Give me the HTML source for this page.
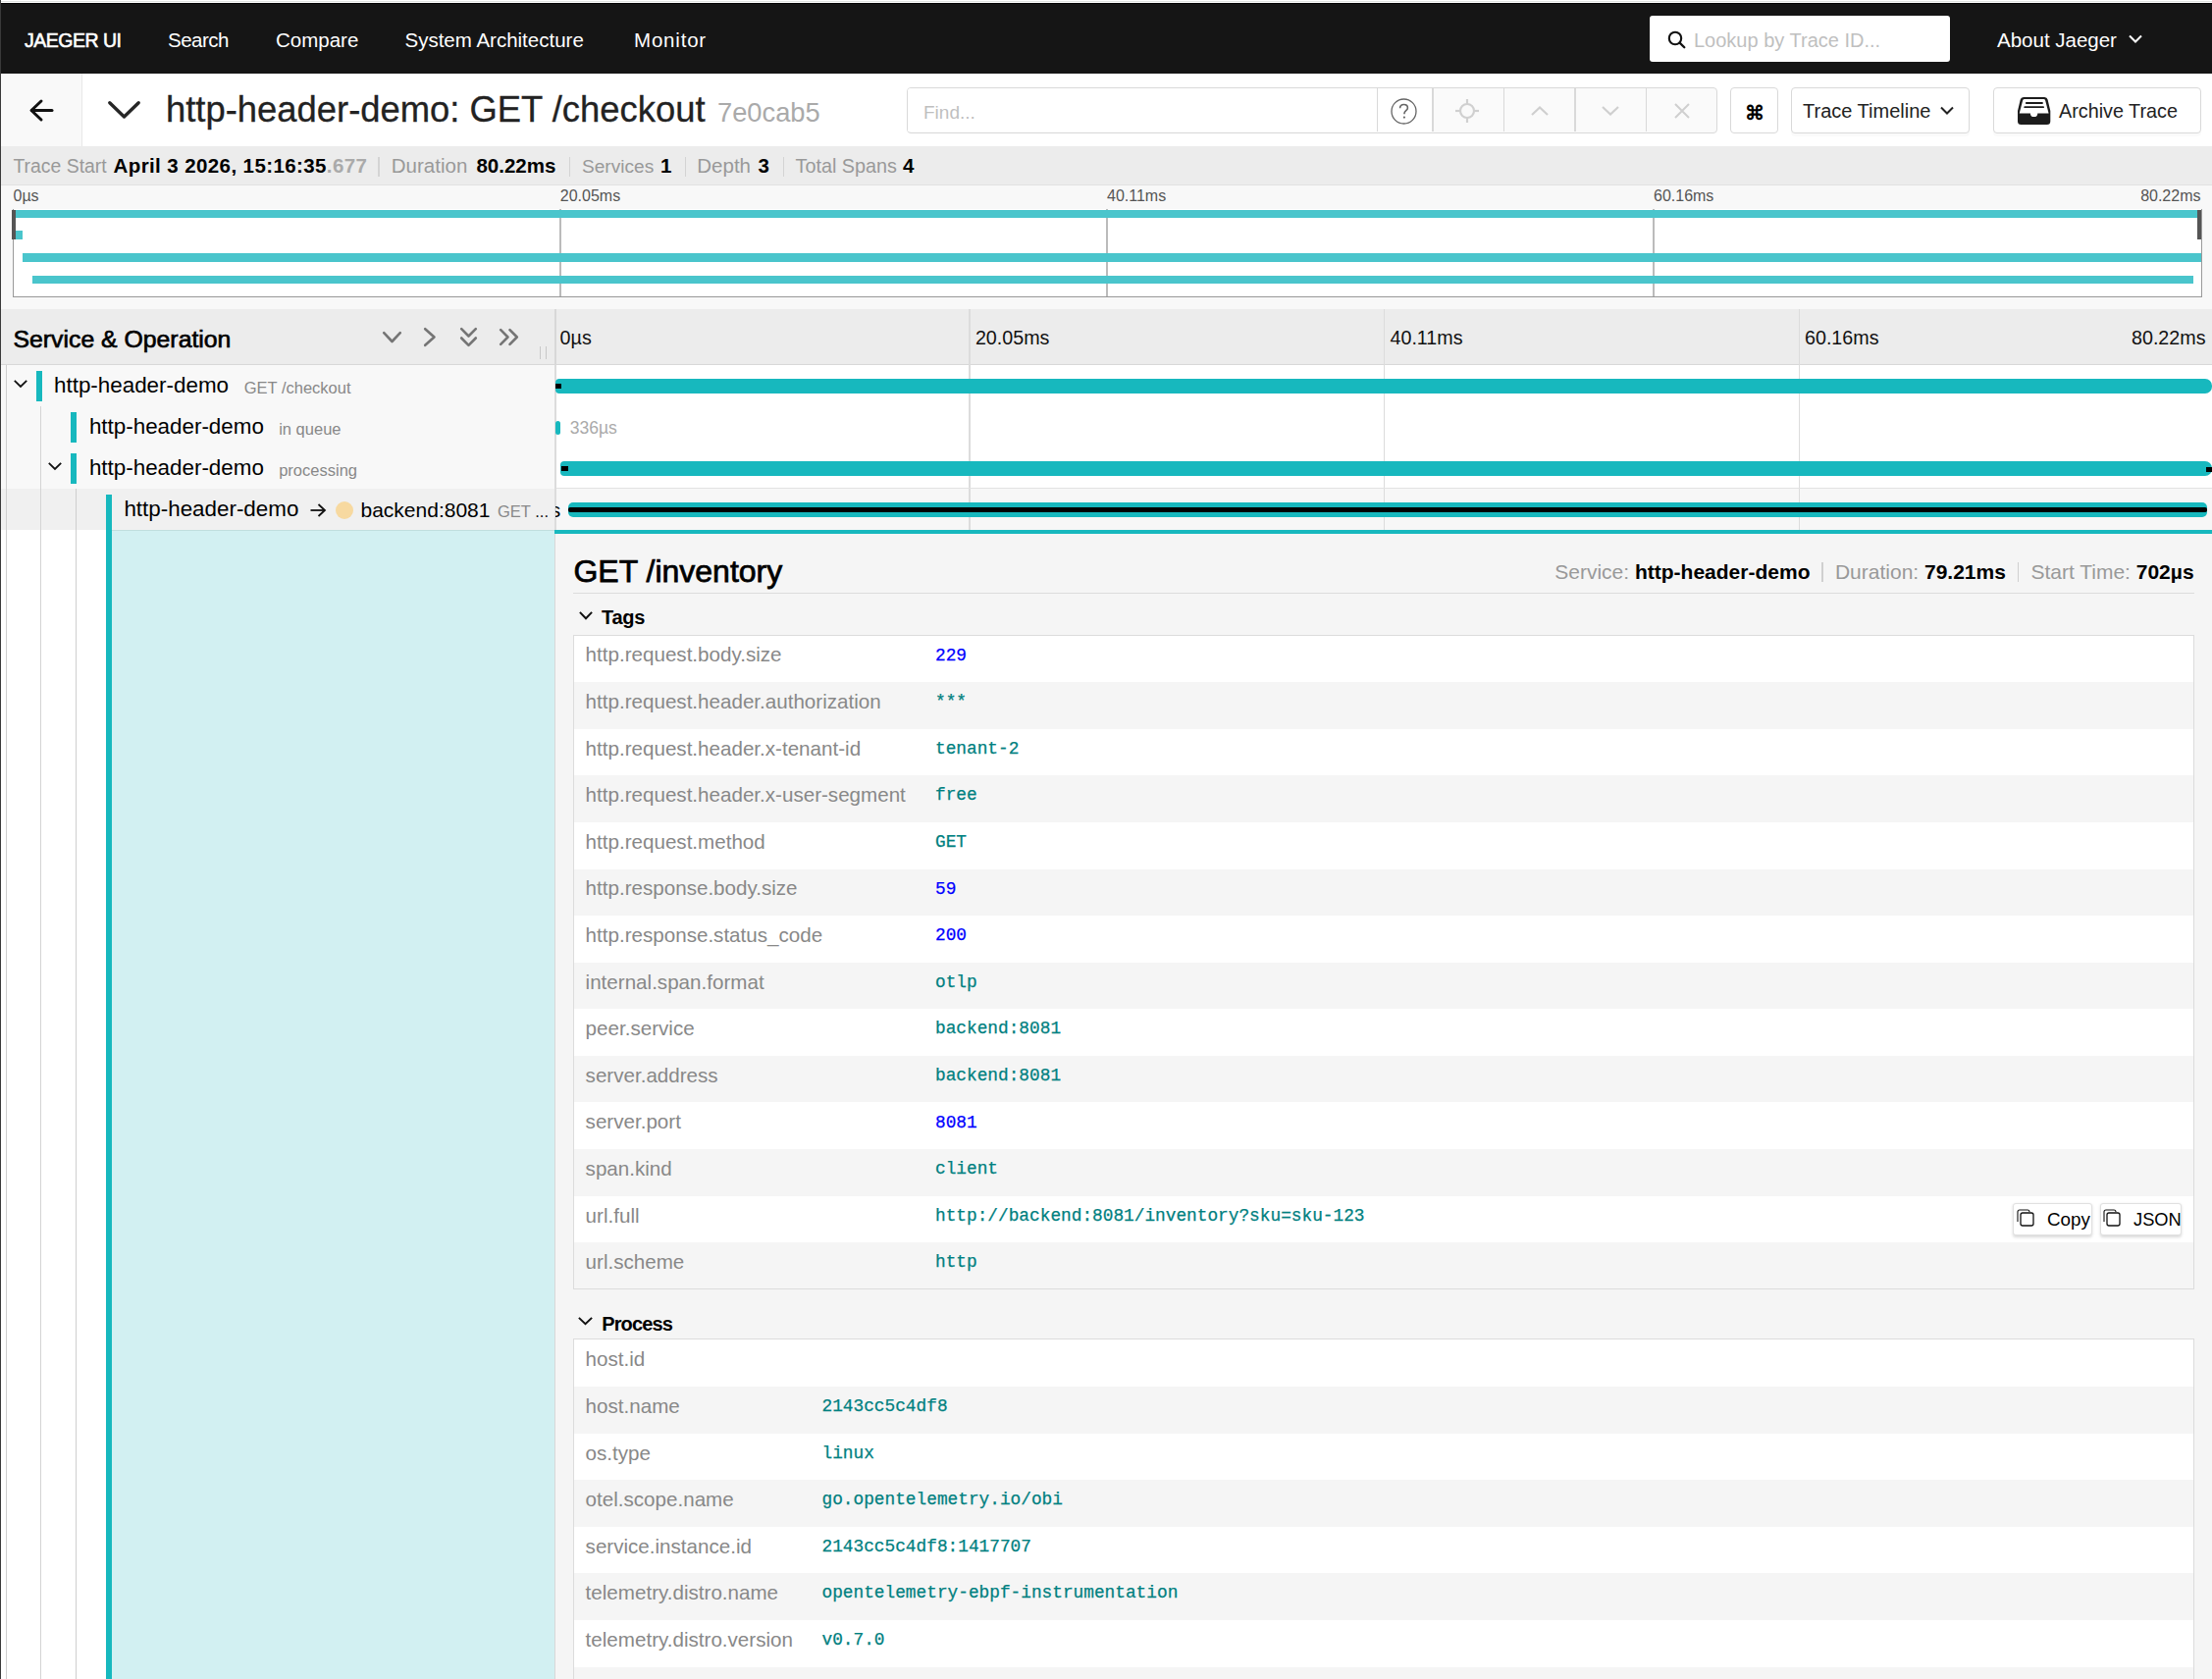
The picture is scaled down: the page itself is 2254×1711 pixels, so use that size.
<!DOCTYPE html>
<html><head><meta charset="utf-8">
<style>
*{box-sizing:border-box;margin:0;padding:0}
html,body{width:2254px;height:1711px;overflow:hidden}
body{position:relative;background:#fff;font-family:"Liberation Sans",sans-serif;color:#000}
.a{position:absolute}
.t{position:absolute;white-space:nowrap;line-height:1}
svg{position:absolute;overflow:visible}
.k{left:596.6px;font-size:20.6px;color:#888}
.v{font-family:"Liberation Mono",monospace;font-size:17.8px;-webkit-text-stroke:0.25px currentColor}
</style></head><body>
<div class="a" style="left:0;top:0;width:1px;height:1711px;background:#3a3a3a;z-index:5"></div>
<!-- top strip -->
<div class="a" style="left:0;top:1px;width:2254px;height:1px;background:#e0e2e0"></div>
<div class="a" style="left:0;top:3px;width:2254px;height:1px;background:#000"></div>
<!-- NAV -->
<div class="a" style="left:0;top:4px;width:2254px;height:71px;background:#151515"></div>
<div class="t" style="left:25px;top:31.5px;font-size:19.5px;letter-spacing:-0.5px;color:#fff;-webkit-text-stroke:0.55px #fff">JAEGER UI</div>
<div class="t" style="left:171px;top:30.6px;font-size:20.5px;letter-spacing:-0.5px;color:#fff">Search</div>
<div class="t" style="left:281px;top:30.6px;font-size:20.5px;color:#fff">Compare</div>
<div class="t" style="left:412.5px;top:30.6px;font-size:20.5px;color:#fff">System Architecture</div>
<div class="t" style="left:646px;top:30.6px;font-size:20.5px;letter-spacing:0.8px;color:#fff">Monitor</div>
<div class="a" style="left:1681px;top:16px;width:306px;height:47px;background:#fff;border-radius:3px"></div>
<svg style="left:1699px;top:31px" width="20" height="20" viewBox="0 0 20 20"><circle cx="8" cy="8" r="6.2" fill="none" stroke="#111" stroke-width="2.1"/><line x1="12.6" y1="12.6" x2="17.3" y2="17.3" stroke="#111" stroke-width="2.3" stroke-linecap="round"/></svg>
<div class="t" style="left:1726px;top:30.6px;font-size:20px;color:#bfbfbf">Lookup by Trace ID...</div>
<div class="t" style="left:2035px;top:30.6px;font-size:20.5px;color:#fff">About Jaeger</div>
<svg style="left:2169px;top:35px" width="14" height="9" viewBox="0 0 14 9"><polyline points="1,1.5 7,7.5 13,1.5" fill="none" stroke="#fff" stroke-width="2"/></svg>

<!-- TRACE HEADER -->
<div class="a" style="left:1px;top:75px;width:83px;height:74px;background:#f9f9f9;border-right:1.5px solid #e8e8e8"></div>
<svg style="left:30px;top:101px" width="25" height="23" viewBox="0 0 25 23"><polyline points="12,2 2,11.5 12,21" fill="none" stroke="#111" stroke-width="3" stroke-linecap="round" stroke-linejoin="round"/><line x1="2.5" y1="11.5" x2="23" y2="11.5" stroke="#111" stroke-width="3" stroke-linecap="round"/></svg>
<svg style="left:110px;top:103px" width="33" height="18" viewBox="0 0 33 18"><polyline points="1.8,1.8 16.5,16 31.2,1.8" fill="none" stroke="#262626" stroke-width="3.4" stroke-linecap="round" stroke-linejoin="round"/></svg>
<div class="t" style="left:169px;top:93.8px;font-size:36.4px;color:#222;-webkit-text-stroke:0.3px #222">http-header-demo: GET /checkout</div>
<div class="t" style="left:731px;top:101.4px;font-size:27.3px;color:#aaa">7e0cab5</div>

<div class="a" style="left:923.5px;top:88.5px;width:826px;height:47px;border:1px solid #d9d9d9;border-radius:4px;background:#fafafa;overflow:hidden">
  <div class="a" style="left:0;top:0;width:535px;height:44px;background:#fff"></div>
  <div class="a" style="left:478px;top:0;width:1.5px;height:44px;background:#d9d9d9"></div>
  <div class="a" style="left:534.5px;top:0;width:1.5px;height:44px;background:#d9d9d9"></div>
  <div class="a" style="left:607px;top:0;width:1.5px;height:44px;background:#d9d9d9"></div>
  <div class="a" style="left:679.5px;top:0;width:1.5px;height:44px;background:#d9d9d9"></div>
  <div class="a" style="left:752px;top:0;width:1.5px;height:44px;background:#d9d9d9"></div>
</div>
<div class="t" style="left:941px;top:104.5px;font-size:19px;color:#bfbfbf">Find...</div>
<svg style="left:1417px;top:99.5px" width="27" height="27" viewBox="0 0 27 27"><circle cx="13.5" cy="13.5" r="12.5" fill="none" stroke="#666" stroke-width="1.3"/><path d="M9.6 10.3c0-2.3 1.7-3.8 3.9-3.8s3.9 1.4 3.9 3.4c0 2.6-3.4 2.8-3.4 5.6v0.8" fill="none" stroke="#666" stroke-width="1.6"/><circle cx="13.9" cy="19.6" r="1.1" fill="#666"/></svg>
<svg style="left:1483px;top:101px" width="24" height="24" viewBox="0 0 24 24"><circle cx="12" cy="12" r="7" fill="none" stroke="#d0d0d0" stroke-width="2.2"/><line x1="12" y1="0" x2="12" y2="5" stroke="#d0d0d0" stroke-width="2.2"/><line x1="12" y1="19" x2="12" y2="24" stroke="#d0d0d0" stroke-width="2.2"/><line x1="0" y1="12" x2="5" y2="12" stroke="#d0d0d0" stroke-width="2.2"/><line x1="19" y1="12" x2="24" y2="12" stroke="#d0d0d0" stroke-width="2.2"/></svg>
<svg style="left:1560px;top:107.5px" width="18" height="10" viewBox="0 0 18 10"><polyline points="1,9 9,1.5 17,9" fill="none" stroke="#cfcfcf" stroke-width="2.2"/></svg>
<svg style="left:1632px;top:107.5px" width="18" height="10" viewBox="0 0 18 10"><polyline points="1,1 9,8.5 17,1" fill="none" stroke="#cfcfcf" stroke-width="2.2"/></svg>
<svg style="left:1706px;top:104.5px" width="16" height="16" viewBox="0 0 16 16"><path d="M1 1L15 15M15 1L1 15" stroke="#cfcfcf" stroke-width="2"/></svg>

<div class="a" style="left:1762.5px;top:88.5px;width:49px;height:47px;border:1px solid #d9d9d9;border-radius:4px;background:#fff"></div>
<div class="t" style="left:1777.5px;top:104.5px;font-size:20px;color:#000;font-weight:bold">&#8984;</div>
<div class="a" style="left:1824.5px;top:88.5px;width:182px;height:47px;border:1px solid #d9d9d9;border-radius:4px;background:#fff;box-shadow:0 3px 0 rgba(0,0,0,0.02)"></div>
<div class="t" style="left:1837px;top:102.5px;font-size:20px;color:#222">Trace Timeline</div>
<svg style="left:1977px;top:107.5px" width="14" height="9" viewBox="0 0 14 9"><polyline points="1,1.5 7,7.5 13,1.5" fill="none" stroke="#222" stroke-width="2"/></svg>
<div class="a" style="left:2031px;top:88.5px;width:211.5px;height:47px;border:1px solid #d9d9d9;border-radius:4px;background:#fff;box-shadow:0 3px 0 rgba(0,0,0,0.02)"></div>
<svg style="left:2056px;top:98.5px" width="33.3" height="28" viewBox="0 0 33.3 28"><path d="M6 0H27.3Q30 0 30.6 2.6L33.3 14V24.5Q33.3 28 29.8 28H3.5Q0 28 0 24.5V14L2.7 2.6Q3.3 0 6 0Z" fill="#1c1c1c"/><path d="M7 2H26.3Q27.8 2 28.2 3.4L31.6 16.4H20.3A3.7 3.7 0 0 1 12.9 16.4H1.7L5.1 3.4Q5.5 2 7 2Z" fill="#fff"/><rect x="7.9" y="5.1" width="18" height="1.8" rx="0.9" fill="#1c1c1c"/><rect x="6.3" y="9.3" width="20.7" height="1.8" rx="0.9" fill="#1c1c1c"/></svg>
<div class="t" style="left:2098px;top:104px;font-size:19.8px;color:#222">Archive Trace</div>

<!-- SUMMARY BAR -->
<div class="a" style="left:1px;top:149px;width:2253px;height:39px;background:#ececec"></div>
<div class="t" style="left:13.5px;top:160px;font-size:19.4px;color:#999">Trace Start</div>
<div class="t" style="left:115.5px;top:159.3px;font-size:20.5px;font-weight:bold;color:#000;letter-spacing:0.4px">April 3 2026, 15:16:35<span style="color:#aaa">.677</span></div>
<div class="a" style="left:385px;top:160px;width:1.5px;height:20px;background:#d4d4d4"></div>
<div class="t" style="left:398.8px;top:159.3px;font-size:20.5px;color:#999">Duration</div>
<div class="t" style="left:485.4px;top:159.3px;font-size:20.5px;font-weight:bold">80.22ms</div>
<div class="a" style="left:579.5px;top:160px;width:1.5px;height:20px;background:#d4d4d4"></div>
<div class="t" style="left:593px;top:160px;font-size:19.1px;color:#999">Services</div>
<div class="t" style="left:673px;top:159.3px;font-size:20.5px;font-weight:bold">1</div>
<div class="a" style="left:697.5px;top:160px;width:1.5px;height:20px;background:#d4d4d4"></div>
<div class="t" style="left:710.3px;top:159.3px;font-size:20.5px;color:#999">Depth</div>
<div class="t" style="left:772.5px;top:159.3px;font-size:20.5px;font-weight:bold">3</div>
<div class="a" style="left:797.5px;top:160px;width:1.5px;height:20px;background:#d4d4d4"></div>
<div class="t" style="left:810.5px;top:159.6px;font-size:19.8px;color:#999">Total Spans</div>
<div class="t" style="left:920px;top:159.3px;font-size:20.5px;font-weight:bold">4</div>

<!-- MINIMAP -->
<div class="a" style="left:1px;top:188px;width:2253px;height:127px;background:#f8f8f8;border-top:1px solid #e2e2e2"></div>
<div class="t" style="left:13.5px;top:191.5px;font-size:16px;color:#555">0µs</div>
<div class="t" style="left:570.8px;top:191.5px;font-size:16px;color:#555">20.05ms</div>
<div class="t" style="left:1128px;top:191.5px;font-size:16px;color:#555">40.11ms</div>
<div class="t" style="left:1685px;top:191.5px;font-size:16px;color:#555">60.16ms</div>
<div class="t" style="left:2180.5px;top:191.5px;font-size:16px;color:#555;width:62px;text-align:right">80.22ms</div>
<div class="a" style="left:12.5px;top:212.5px;width:2231px;height:90.5px;background:#fff;border:1.5px solid #999;border-top:0"></div>
<div class="a" style="left:570px;top:213px;width:1.5px;height:89px;background:#bbb"></div>
<div class="a" style="left:1127px;top:213px;width:1.5px;height:89px;background:#bbb"></div>
<div class="a" style="left:1684px;top:213px;width:1.5px;height:89px;background:#bbb"></div>
<div class="a" style="left:13.5px;top:213.5px;width:2229px;height:8.5px;background:#4ac5cc"></div>
<div class="a" style="left:15.5px;top:235px;width:7px;height:9px;background:#4ac5cc"></div>
<div class="a" style="left:22.5px;top:257.5px;width:2220px;height:9px;background:#4ac5cc"></div>
<div class="a" style="left:32.5px;top:280.7px;width:2202.5px;height:8.6px;background:#4ac5cc"></div>
<div class="a" style="left:12px;top:213.5px;width:4px;height:30.5px;background:#555"></div>
<div class="a" style="left:2239px;top:213.5px;width:4px;height:30.5px;background:#555"></div>

<!-- TIMELINE HEADER -->
<div class="a" style="left:1px;top:315px;width:2253px;height:57px;background:#ececec;border-bottom:1.5px solid #d8d8d8"></div>
<div class="a" style="left:565px;top:315px;width:1.5px;height:57px;background:#d8d8d8"></div>
<div class="a" style="left:987.2px;top:315px;width:1.5px;height:225px;background:#dcdcdc"></div>
<div class="a" style="left:1409.8px;top:315px;width:1.5px;height:225px;background:#dcdcdc"></div>
<div class="a" style="left:1832.5px;top:315px;width:1.5px;height:225px;background:#dcdcdc"></div>
<div class="t" style="left:13.5px;top:334.2px;font-size:24.8px;color:#000;-webkit-text-stroke:0.65px #000">Service &amp; Operation</div>
<svg style="left:390px;top:337.5px" width="19" height="12" viewBox="0 0 19 12"><polyline points="1.2,1.2 9.5,10 17.8,1.2" fill="none" stroke="#757575" stroke-width="2.6" stroke-linecap="round" stroke-linejoin="round"/></svg>
<svg style="left:431.5px;top:334px" width="12" height="19" viewBox="0 0 12 19"><polyline points="1.2,1.2 10.5,9.5 1.2,17.8" fill="none" stroke="#757575" stroke-width="2.6" stroke-linecap="round" stroke-linejoin="round"/></svg>
<svg style="left:468.5px;top:333.5px" width="17" height="19" viewBox="0 0 17 19"><polyline points="1.2,1.2 8.5,8.5 15.8,1.2" fill="none" stroke="#757575" stroke-width="2.6" stroke-linecap="round" stroke-linejoin="round"/><polyline points="1.2,10.5 8.5,17.8 15.8,10.5" fill="none" stroke="#757575" stroke-width="2.6" stroke-linecap="round" stroke-linejoin="round"/></svg>
<svg style="left:508.5px;top:335px" width="19" height="17" viewBox="0 0 19 17"><polyline points="1.2,1.2 8.5,8.5 1.2,15.8" fill="none" stroke="#757575" stroke-width="2.6" stroke-linecap="round" stroke-linejoin="round"/><polyline points="10.5,1.2 17.8,8.5 10.5,15.8" fill="none" stroke="#757575" stroke-width="2.6" stroke-linecap="round" stroke-linejoin="round"/></svg>
<div class="a" style="left:550px;top:353px;width:1px;height:12.5px;background:#c8c8c8"></div>
<div class="a" style="left:556px;top:353px;width:1px;height:12.5px;background:#c8c8c8"></div>
<div class="t" style="left:570.6px;top:335.3px;font-size:19.7px;color:#111">0µs</div>
<div class="t" style="left:993.9px;top:335.3px;font-size:19.7px;color:#111">20.05ms</div>
<div class="t" style="left:1416.5px;top:335.3px;font-size:19.7px;color:#111">40.11ms</div>
<div class="t" style="left:1839px;top:335.3px;font-size:19.7px;color:#111">60.16ms</div>
<div class="t" style="left:2172px;top:335.3px;font-size:19.7px;color:#111;width:75px;text-align:right">80.22ms</div>

<!-- ROWS -->
<div class="a" style="left:1px;top:372px;width:564px;height:126px;background:#f8f8f8"></div>
<div class="a" style="left:1px;top:498px;width:564px;height:42px;background:#f0f0f0"></div>
<div class="a" style="left:565px;top:498px;width:1689px;height:42px;background:#f7f7f7"></div>
<div class="a" style="left:565px;top:372px;width:1.5px;height:168px;background:#dcdcdc"></div>
<div class="a" style="left:987.2px;top:372px;width:1.5px;height:168px;background:#dcdcdc"></div>
<div class="a" style="left:1409.8px;top:372px;width:1.5px;height:168px;background:#dcdcdc"></div>
<div class="a" style="left:1832.5px;top:372px;width:1.5px;height:168px;background:#dcdcdc"></div>
<div class="a" style="left:566.5px;top:497px;width:1687.5px;height:1px;background:#e2e2e2"></div>
<div class="a" style="left:5.5px;top:372px;width:1px;height:1339px;background:#cfcfcf"></div>
<div class="a" style="left:41px;top:414px;width:1px;height:1297px;background:#d4d4d4"></div>
<div class="a" style="left:76.5px;top:498px;width:1.5px;height:1213px;background:#cfcfcf"></div>
<!-- row1 -->
<svg style="left:13.5px;top:386.5px" width="14" height="8" viewBox="0 0 14 8"><polyline points="0.8,0.8 7,7 13.2,0.8" fill="none" stroke="#111" stroke-width="1.8"/></svg>
<div class="a" style="left:37px;top:378.2px;width:6px;height:30.7px;background:#17b8be"></div>
<div class="t" style="left:55px;top:382.2px;font-size:22.4px;color:#000">http-header-demo</div>
<div class="t" style="left:248.7px;top:387.2px;font-size:16.5px;color:#888">GET /checkout</div>
<!-- row2 -->
<div class="a" style="left:72px;top:420px;width:6px;height:30.8px;background:#17b8be"></div>
<div class="t" style="left:90.9px;top:424px;font-size:22.4px;color:#000">http-header-demo</div>
<div class="t" style="left:284.2px;top:429px;font-size:16.5px;color:#888">in queue</div>
<!-- row3 -->
<svg style="left:48.5px;top:470.5px" width="14" height="8" viewBox="0 0 14 8"><polyline points="0.8,0.8 7,7 13.2,0.8" fill="none" stroke="#111" stroke-width="1.8"/></svg>
<div class="a" style="left:72px;top:462px;width:6px;height:30.8px;background:#17b8be"></div>
<div class="t" style="left:90.9px;top:466.2px;font-size:22.4px;color:#000">http-header-demo</div>
<div class="t" style="left:284.2px;top:471.2px;font-size:16.5px;color:#888">processing</div>
<!-- row4 -->
<div class="a" style="left:108px;top:504px;width:6px;height:1207px;background:#17b8be"></div>
<div class="t" style="left:126.4px;top:507.7px;font-size:22.4px;color:#000">http-header-demo</div>
<svg style="left:316px;top:513px" width="16" height="14" viewBox="0 0 16 14"><polyline points="8.5,1 15,7 8.5,13" fill="none" stroke="#111" stroke-width="1.8"/><line x1="0.5" y1="7" x2="14.5" y2="7" stroke="#111" stroke-width="1.8"/></svg>
<div class="a" style="left:342.3px;top:511px;width:18px;height:18px;border-radius:50%;background:#f7d9a0"></div>
<div class="t" style="left:367.5px;top:508.7px;font-size:21px;color:#000">backend:8081</div>
<div class="t" style="left:507px;top:512.7px;font-size:16.5px;color:#888">GET <span style="color:#111">...</span></div>
<div class="a" style="left:565.5px;top:500px;width:12px;height:38px;overflow:hidden"><div class="t" style="right:6.3px;top:9px;font-size:21px;color:#000">79.21ms</div></div>
<!-- timeline bars -->
<div class="a" style="left:565.8px;top:386px;width:1688px;height:14.8px;background:#17b8be;border-radius:4px 7px 7px 4px"></div>
<div class="a" style="left:565.8px;top:391px;width:6.2px;height:4.7px;background:#000"></div>
<div class="a" style="left:565.8px;top:428.8px;width:4.8px;height:14.2px;background:#17b8be;border-radius:3px"></div>
<div class="t" style="left:580.7px;top:428px;font-size:17.5px;color:#aaa">336µs</div>
<div class="a" style="left:571.2px;top:470.3px;width:1682.8px;height:14.4px;background:#17b8be;border-radius:4px 7px 7px 4px"></div>
<div class="a" style="left:572px;top:475px;width:6.8px;height:4.7px;background:#000"></div>
<div class="a" style="left:2248px;top:476px;width:6px;height:5px;background:#000"></div>
<div class="a" style="left:579.3px;top:512px;width:1669.4px;height:14.8px;background:#17b8be;border-radius:5px"></div>
<div class="a" style="left:579.3px;top:516.7px;width:1669.4px;height:5.4px;background:#000;border-radius:2px"></div>

<!-- DETAIL -->
<div class="a" style="left:114px;top:540px;width:451.5px;height:1171px;background:#d2f0f2;border-top:1px solid #c0dede"></div>
<div class="a" style="left:565px;top:540px;width:1689px;height:3.6px;background:#17b8be"></div>
<div class="a" style="left:565px;top:543.6px;width:1689px;height:1168px;background:#f5f5f5;border-left:1.5px solid #d8d8d8"></div>
<div class="t" style="left:584.4px;top:565.9px;font-size:32px;color:#000;-webkit-text-stroke:0.75px #000">GET /inventory</div>
<div class="t" style="left:1400px;width:835.6px;text-align:right;top:571.5px;font-size:21px;color:#999">Service: <b style="color:#000">http-header-demo</b><span style="display:inline-block;width:1.5px;height:20px;background:#d0d0d0;margin:0 12px;vertical-align:-3px"></span>Duration: <b style="color:#000">79.21ms</b><span style="display:inline-block;width:1.5px;height:20px;background:#d0d0d0;margin:0 12px;vertical-align:-3px"></span>Start Time: <b style="color:#000">702µs</b></div>
<div class="a" style="left:584px;top:603.5px;width:1651.6px;height:1.5px;background:#dcdcdc"></div>
<svg style="left:589.8px;top:622.7px" width="14" height="8.5" viewBox="0 0 14 8.5"><polyline points="0.9,0.9 7,7.2 13.1,0.9" fill="none" stroke="#111" stroke-width="2"/></svg>
<div class="t" style="left:612.9px;top:619.3px;font-size:20px;font-weight:bold;letter-spacing:-0.2px;color:#000">Tags</div>
<svg style="left:588.9px;top:1341.5px" width="15" height="8.5" viewBox="0 0 15 8.5"><polyline points="0.9,0.9 7.5,7.2 14.1,0.9" fill="none" stroke="#111" stroke-width="2"/></svg>
<div class="t" style="left:613.2px;top:1338.8px;font-size:20px;font-weight:bold;letter-spacing:-0.85px;color:#000">Process</div>
<div class="a" style="left:584px;top:646.5px;width:1652px;height:667.9px;background:#fff"></div>
<div class="t k" style="top:657.4px">http.request.body.size</div>
<div class="t v" style="left:953px;top:659.5px;color:#0000ff">229</div>
<div class="a" style="left:585px;top:695.1px;width:1650px;height:47.6px;background:#f5f5f5"></div>
<div class="t k" style="top:705.0px">http.request.header.authorization</div>
<div class="t v" style="left:953px;top:707.1px;color:#008080">***</div>
<div class="t k" style="top:752.6px">http.request.header.x-tenant-id</div>
<div class="t v" style="left:953px;top:754.7px;color:#008080">tenant-2</div>
<div class="a" style="left:585px;top:790.3px;width:1650px;height:47.6px;background:#f5f5f5"></div>
<div class="t k" style="top:800.2px">http.request.header.x-user-segment</div>
<div class="t v" style="left:953px;top:802.3px;color:#008080">free</div>
<div class="t k" style="top:847.8px">http.request.method</div>
<div class="t v" style="left:953px;top:849.9px;color:#008080">GET</div>
<div class="a" style="left:585px;top:885.5px;width:1650px;height:47.6px;background:#f5f5f5"></div>
<div class="t k" style="top:895.4px">http.response.body.size</div>
<div class="t v" style="left:953px;top:897.5px;color:#0000ff">59</div>
<div class="t k" style="top:943.0px">http.response.status_code</div>
<div class="t v" style="left:953px;top:945.1px;color:#0000ff">200</div>
<div class="a" style="left:585px;top:980.7px;width:1650px;height:47.6px;background:#f5f5f5"></div>
<div class="t k" style="top:990.6px">internal.span.format</div>
<div class="t v" style="left:953px;top:992.7px;color:#008080">otlp</div>
<div class="t k" style="top:1038.2px">peer.service</div>
<div class="t v" style="left:953px;top:1040.3px;color:#008080">backend:8081</div>
<div class="a" style="left:585px;top:1075.9px;width:1650px;height:47.6px;background:#f5f5f5"></div>
<div class="t k" style="top:1085.8px">server.address</div>
<div class="t v" style="left:953px;top:1087.9px;color:#008080">backend:8081</div>
<div class="t k" style="top:1133.4px">server.port</div>
<div class="t v" style="left:953px;top:1135.5px;color:#0000ff">8081</div>
<div class="a" style="left:585px;top:1171.1px;width:1650px;height:47.6px;background:#f5f5f5"></div>
<div class="t k" style="top:1181.0px">span.kind</div>
<div class="t v" style="left:953px;top:1183.1px;color:#008080">client</div>
<div class="t k" style="top:1228.6px">url.full</div>
<div class="t v" style="left:953px;top:1230.7px;color:#008080">http://backend:8081/inventory?sku=sku-123</div>
<div class="a" style="left:585px;top:1266.3px;width:1650px;height:47.6px;background:#f5f5f5"></div>
<div class="t k" style="top:1276.2px">url.scheme</div>
<div class="t v" style="left:953px;top:1278.3px;color:#008080">http</div>
<div class="a" style="left:584px;top:646.5px;width:1652px;height:667.9px;border:1.5px solid #dcdcdc"></div>
<div class="a" style="left:584px;top:1364.4px;width:1652px;height:382.3px;background:#fff"></div>
<div class="t k" style="top:1375.3px">host.id</div>
<div class="a" style="left:585px;top:1413.0px;width:1650px;height:47.6px;background:#f5f5f5"></div>
<div class="t k" style="top:1422.9px">host.name</div>
<div class="t v" style="left:837.5px;top:1425.0px;color:#008080">2143cc5c4df8</div>
<div class="t k" style="top:1470.5px">os.type</div>
<div class="t v" style="left:837.5px;top:1472.6px;color:#008080">linux</div>
<div class="a" style="left:585px;top:1508.2px;width:1650px;height:47.6px;background:#f5f5f5"></div>
<div class="t k" style="top:1518.1px">otel.scope.name</div>
<div class="t v" style="left:837.5px;top:1520.2px;color:#008080">go.opentelemetry.io/obi</div>
<div class="t k" style="top:1565.7px">service.instance.id</div>
<div class="t v" style="left:837.5px;top:1567.8px;color:#008080">2143cc5c4df8:1417707</div>
<div class="a" style="left:585px;top:1603.4px;width:1650px;height:47.6px;background:#f5f5f5"></div>
<div class="t k" style="top:1613.3px">telemetry.distro.name</div>
<div class="t v" style="left:837.5px;top:1615.4px;color:#008080">opentelemetry-ebpf-instrumentation</div>
<div class="t k" style="top:1660.9px">telemetry.distro.version</div>
<div class="t v" style="left:837.5px;top:1663.0px;color:#008080">v0.7.0</div>
<div class="a" style="left:585px;top:1698.6px;width:1650px;height:47.6px;background:#f5f5f5"></div>
<div class="t k" style="top:1708.5px">telemetry.sdk.language</div>
<div class="t v" style="left:837.5px;top:1710.6px;color:#008080">go</div>
<div class="a" style="left:584px;top:1364.4px;width:1652px;height:382.3px;border:1.5px solid #dcdcdc"></div>
<div class="a" style="left:2050.8px;top:1225.5px;width:81.3px;height:33.5px;background:#fff;border:1px solid #e0e0e0;border-radius:3px;box-shadow:0 1.5px 3px rgba(0,0,0,0.15)"></div>
<svg style="left:2055px;top:1232px" width="18" height="18" viewBox="0 0 18 18"><path d="M1 13V3Q1 1 3 1H11Q13 1 13 3" fill="none" stroke="#111" stroke-width="1.1"/><rect x="4" y="4" width="13" height="13" rx="2" fill="#fff" stroke="#111" stroke-width="1.3"/></svg>
<div class="t" style="left:2086px;top:1233.6px;font-size:18.8px;color:#000">Copy</div>
<div class="a" style="left:2139.7px;top:1225.5px;width:83.2px;height:33.5px;background:#fff;border:1px solid #e0e0e0;border-radius:3px;box-shadow:0 1.5px 3px rgba(0,0,0,0.15)"></div>
<svg style="left:2143px;top:1232px" width="18" height="18" viewBox="0 0 18 18"><path d="M1 13V3Q1 1 3 1H11Q13 1 13 3" fill="none" stroke="#111" stroke-width="1.1"/><rect x="4" y="4" width="13" height="13" rx="2" fill="#fff" stroke="#111" stroke-width="1.3"/></svg>
<div class="t" style="left:2174px;top:1234px;font-size:18.3px;color:#000">JSON</div>
</body></html>
